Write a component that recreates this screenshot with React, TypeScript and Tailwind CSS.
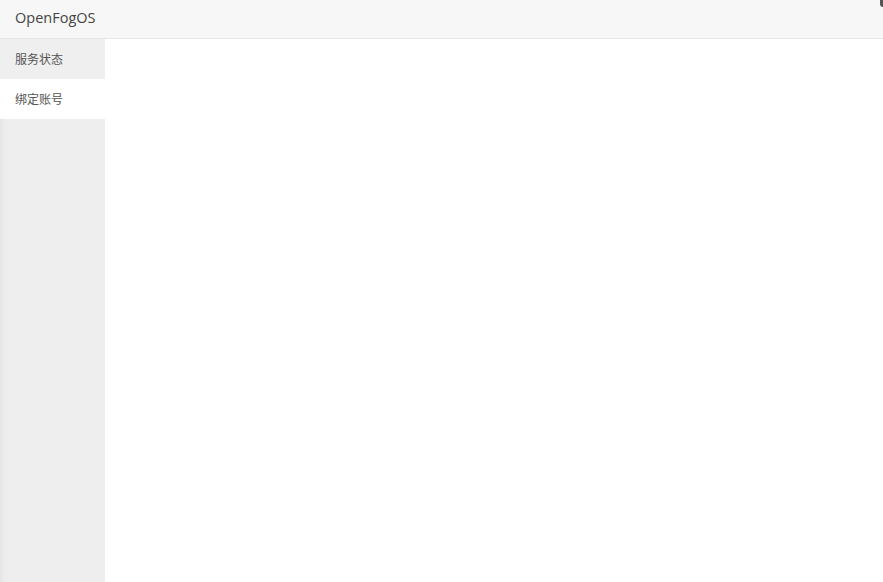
import { useState } from 'react';

const menu = ['服务状态', '绑定账号'];

export default function App() {
  const [active, setActive] = useState(1);

  return (
    <div className="relative flex h-[582px] w-[883px] flex-col overflow-hidden bg-white font-['Noto_Sans_CJK_SC',sans-serif] text-[#333]">
      {/* Header */}
      <div className="flex h-[39px] shrink-0 items-center border-b border-[#e6e6e6] bg-[#f7f7f7] px-[15px] pb-[2px]">
        <span className="font-['Open_Sans','Noto_Sans_CJK_SC',sans-serif] text-[14.5px] text-[#444]">OpenFogOS</span>
      </div>
      <div className="absolute right-0 top-0 h-[7px] w-[3px] rounded-bl-full bg-[#555]" />

      <div className="flex flex-1">
        {/* Sidebar */}
        <div className="flex w-[105px] shrink-0 flex-col bg-[#eeeeee] bg-gradient-to-r from-[#e6e6e6] via-[#eeeeee] via-[6px] to-[#eeeeee]">
          {menu.map((label, i) => (
            <div
              key={label}
              onClick={() => setActive(i)}
              className={`flex h-[40px] cursor-pointer items-center px-[15px] text-[12px] text-[#555] ${
                active === i ? 'bg-white' : 'bg-[#efefef]'
              }`}
            >
              {label}
            </div>
          ))}
        </div>

        {/* Content */}
        <div className="flex-1 bg-white" />
      </div>
    </div>
  );
}
